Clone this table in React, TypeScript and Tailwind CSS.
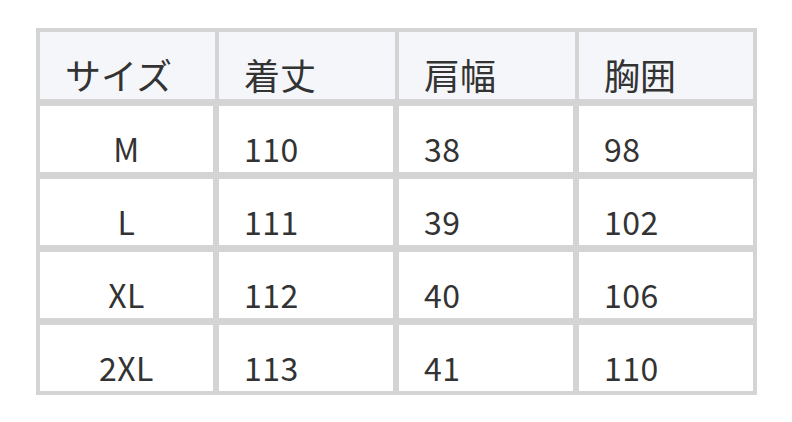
const header = ["サイズ", "着丈", "肩幅", "胸囲"]

const rows = [
  ["M", "110", "38", "98"],
  ["L", "111", "39", "102"],
  ["XL", "112", "40", "106"],
  ["2XL", "113", "41", "110"],
]

export default function App() {
  return (
    <div
      className="w-[792px] h-[422px] bg-white pt-[28px] pl-[36px] text-[#333333]"
      style={{ fontFamily: '"Noto Sans CJK JP", "Noto Sans", sans-serif' }}
    >
      <div className="w-[721px] h-[367px] bg-[#d4d4d4] p-[4px] flex flex-col gap-y-[6.5px]">
        <div className="grid grid-cols-[175px_176px_176px_174px] gap-x-[4px] h-[67px]">
          {header.map((h) => (
            <div key={h} className="bg-[#f5f6fa] flex items-end pl-[25px] pb-[7px] text-[36px] leading-none">
              {h}
            </div>
          ))}
        </div>
        {rows.map((r) => (
          <div key={r[0]} className="grid grid-cols-[173px_174px_174px_174px] gap-x-[6px] h-[66.5px]">
            {r.map((c, i) => (
              <div
                key={i}
                className={
                  i === 0
                    ? "bg-white flex items-end justify-center pb-[8px] text-[32px] leading-none tracking-[0.5px]"
                    : "bg-white flex items-end pl-[25px] pb-[8px] text-[32px] leading-none tracking-[0.5px]"
                }
              >
                {c}
              </div>
            ))}
          </div>
        ))}
      </div>
    </div>
  )
}
